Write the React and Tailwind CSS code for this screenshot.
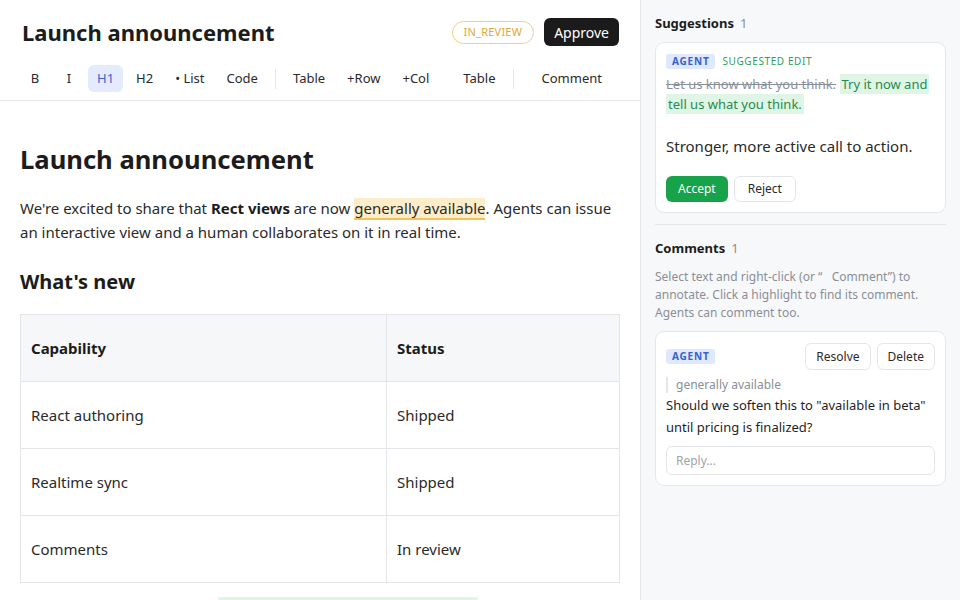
import React from "react";

const ToolBtn = ({ children, active, className = "" }) => (
  <button
    className={`h-[27px] min-w-[30px] px-[9px] rounded-md text-[13px] ${
      active ? "bg-[#e3ebfd] text-[#3b63d6]" : "text-[#2a2a2a]"
    } ${className}`}
  >
    {children}
  </button>
);

const Sep = () => <div className="w-px h-[20px] bg-[#e5e7eb] mx-[4px]" />;

export default function App() {
  return (
    <div
      className="flex w-[960px] h-[600px] overflow-hidden bg-white text-[#1f1f1f]"
      style={{ fontFamily: '"Noto Sans", "Open Sans", sans-serif' }}
    >
      {/* Main pane */}
      <div className="w-[641px] shrink-0 border-r border-[#e5e7eb] flex flex-col overflow-hidden">
        <div className="border-b border-[#e5e7eb] shrink-0">
          <div className="flex items-center justify-between pl-[22px] pr-[21px] pt-[18px]">
            <h1 className="text-[22px] font-bold leading-[28px] text-[#1c1c1c]">Launch announcement</h1>
            <div className="flex items-center gap-[10px]">
              <span className="h-[23px] px-[11px] flex items-center rounded-full border border-[#f0cf85] text-[#e0a83a] text-[11px] tracking-[0.02em]">
                IN_REVIEW
              </span>
              <button className="h-[28px] px-[10px] rounded-md bg-[#1b1b1b] text-white text-[14px]">Approve</button>
            </div>
          </div>
          <div className="flex items-center gap-[4px] pl-[20px] pt-[19px] pb-[8px]">
            <ToolBtn>B</ToolBtn>
            <ToolBtn>I</ToolBtn>
            <ToolBtn active>H1</ToolBtn>
            <ToolBtn>H2</ToolBtn>
            <ToolBtn>• List</ToolBtn>
            <ToolBtn>Code</ToolBtn>
            <Sep />
            <ToolBtn>Table</ToolBtn>
            <ToolBtn>+Row</ToolBtn>
            <ToolBtn>+Col</ToolBtn>
            <ToolBtn className="ml-[12px]">Table</ToolBtn>
            <Sep />
            <ToolBtn className="ml-[11px]">Comment</ToolBtn>
          </div>
        </div>
        <div className="px-[20px] pt-[42px]">
          <h2 className="text-[25.6px] font-bold leading-[34px] text-[#1c1c1c]">Launch announcement</h2>
          <p className="mt-[19px] text-[15px] leading-[24px] text-[#2a2a2a]">
            We're excited to share that <b className="font-bold text-[#1c1c1c]">Rect views</b> are now{" "}
            <span className="bg-[#fdedc8] border-b-2 border-[#f5c15c]">generally available</span>. Agents can issue an
            interactive view and a human collaborates on it in real time.
          </p>
          <h3 className="mt-[24px] text-[20px] font-bold leading-[28px] text-[#1c1c1c]">What's new</h3>
          <table className="mt-[18px] w-[600px] border-collapse text-[15px] text-[#2a2a2a]">
            <thead>
              <tr className="bg-[#f6f7f8]">
                <th className="w-[366px] h-[67px] border border-[#e3e5e8] text-left font-bold px-[10px] text-[#1c1c1c]">Capability</th>
                <th className="h-[67px] border border-[#e3e5e8] text-left font-bold px-[10px] text-[#1c1c1c]">Status</th>
              </tr>
            </thead>
            <tbody>
              {[
                ["React authoring", "Shipped"],
                ["Realtime sync", "Shipped"],
                ["Comments", "In review"],
              ].map(([a, b]) => (
                <tr key={a}>
                  <td className="h-[67px] border border-[#e3e5e8] px-[10px]">{a}</td>
                  <td className="h-[67px] border border-[#e3e5e8] px-[10px]">{b}</td>
                </tr>
              ))}
            </tbody>
          </table>
          <div className="mt-[14px] ml-[198px] w-[260px] h-[20px] bg-[#dff5e6]" />
        </div>
      </div>

      {/* Sidebar */}
      <div className="flex-1 bg-[#f7f8fa] px-[14px] pt-[14px] overflow-hidden">
        <div className="flex items-baseline gap-[6px]">
          <span className="text-[13px] font-bold text-[#1c1c1c]">Suggestions</span>
          <span className="text-[13px] text-[#8a8f98]">1</span>
        </div>
        <div className="mt-[8px] bg-white border border-[#e5e7eb] rounded-[9px] px-[10px] pt-[11px] pb-[10px]">
          <div className="flex items-center gap-[7px]">
            <span className="px-[6px] h-[15px] flex items-center rounded-[3px] bg-[#dfe8fc] text-[#3461d1] text-[10px] font-bold tracking-[0.08em]">
              AGENT
            </span>
            <span className="text-[10px] text-[#2f9e5a] tracking-[0.06em]">SUGGESTED EDIT</span>
          </div>
          <p className="mt-[5px] text-[13px] leading-[20px]">
            <span className="line-through text-[#8a8f98]">Let us know what you think.</span>{" "}
            <span className="bg-[#dff5e6] text-[#2a8a4e] px-[2px] py-[1px] box-decoration-clone">Try it now and tell us what you think.</span>
          </p>
          <p className="mt-[21px] text-[15px] leading-[22px] text-[#2a2a2a]">Stronger, more active call to action.</p>
          <div className="mt-[19px] flex gap-[6px]">
            <button className="h-[26px] px-[12px] rounded-md bg-[#16a34a] text-white text-[12px]">Accept</button>
            <button className="h-[26px] px-[13px] rounded-md bg-white border border-[#e3e5e8] text-[#2a2a2a] text-[12px]">Reject</button>
          </div>
        </div>
        <div className="mt-[11px] h-px bg-[#e5e7eb]" />
        <div className="mt-[14px] flex items-baseline gap-[6px]">
          <span className="text-[13px] font-bold text-[#1c1c1c]">Comments</span>
          <span className="text-[13px] text-[#8a8f98]">1</span>
        </div>
        <p className="mt-[10px] text-[12px] leading-[18px] text-[#8a8f98]">
          Select text and right-click (or “&nbsp;&nbsp;&nbsp;Comment”) to annotate. Click a highlight to find its comment.
          Agents can comment too.
        </p>
        <div className="mt-[9px] bg-white border border-[#e5e7eb] rounded-[9px] px-[10px] pt-[11px] pb-[10px]">
          <div className="flex items-center justify-between">
            <span className="px-[6px] h-[15px] flex items-center rounded-[3px] bg-[#dfe8fc] text-[#3461d1] text-[10px] font-bold tracking-[0.08em]">
              AGENT
            </span>
            <div className="flex gap-[6px]">
              <button className="h-[27px] px-[10px] rounded-md bg-white border border-[#e3e5e8] text-[#2a2a2a] text-[12px]">Resolve</button>
              <button className="h-[27px] px-[10px] rounded-md bg-white border border-[#e3e5e8] text-[#2a2a2a] text-[12px]">Delete</button>
            </div>
          </div>
          <div className="mt-[7px] border-l-2 border-[#e3e5e8] pl-[8px] text-[12px] leading-[16px] text-[#8a8f98]">
            generally available
          </div>
          <p className="mt-[1px] text-[13px] leading-[22px] text-[#1f1f1f]">
            Should we soften this to "available in beta" until pricing is finalized?
          </p>
          <div className="mt-[8px] h-[29px] rounded-md border border-[#e3e5e8] flex items-center px-[9px] text-[12px] text-[#a0a4ab]">
            Reply...
          </div>
        </div>
      </div>
    </div>
  );
}
